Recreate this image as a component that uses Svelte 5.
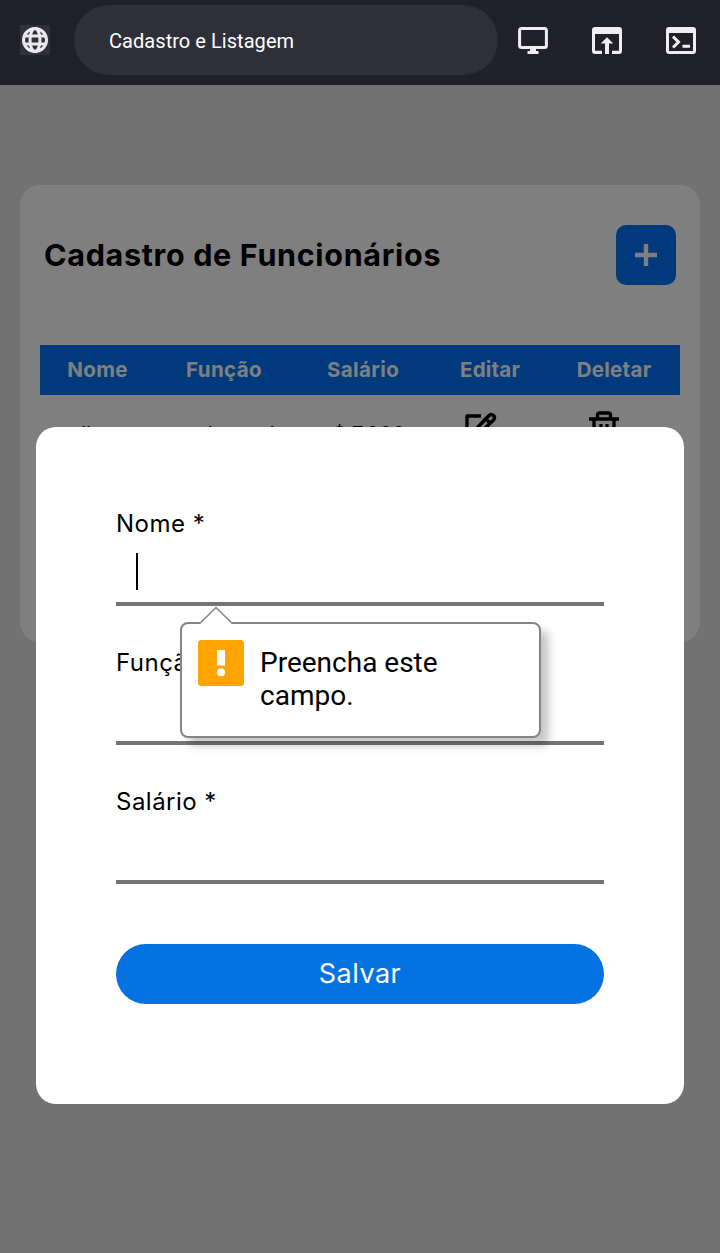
<script>
  const columns = [
    { label: 'Nome', width: 115, spacing: 0.35 },
    { label: 'Função', width: 138, spacing: 0.4 },
    { label: 'Salário', width: 140, spacing: 0.4 },
    { label: 'Editar', width: 114, spacing: 0.2 },
    { label: 'Deletar', width: 134, spacing: 0.3 }
  ];
  const fields = ['Nome', 'Função', 'Salário'];
</script>

<div class="screen">
  <header>
    <span class="globe">
      <svg width="30" height="30" viewBox="0 0 30 30" fill="none" stroke="#e9e9ef" stroke-width="3">
        <circle cx="15" cy="15" r="11.500" />
        <ellipse cx="15" cy="15" rx="5" ry="11.500" />
        <path d="M4 11h22M4 19h22" />
      </svg>
    </span>
    <div class="address">Cadastro e Listagem</div>
    <nav>
      <svg width="30" height="28" viewBox="0 0 30 28">
        <rect x="1.600" y="1.600" width="26.800" height="19" rx="2" fill="none" stroke="#ededf2" stroke-width="3" />
        <path d="M12 21h6v3h2.500v3h-11v-3H12z" fill="#ededf2" />
      </svg>
      <svg width="30" height="28" viewBox="0 0 30 28" fill="#ededf2">
        <path d="M3 0h24a3 3 0 0 1 3 3v21a3 3 0 0 1-3 3h-7v-3.300H27V7H3v16.700h7V27H3a3 3 0 0 1-3-3V3a3 3 0 0 1 3-3z" />
        <path d="M15 10.300l6.300 6.200h-4.300V27h-4V16.500H8.700z" />
      </svg>
      <svg width="30" height="28" viewBox="0 0 30 28">
        <path fill="#ededf2" fill-rule="evenodd" d="M3 0h24a3 3 0 0 1 3 3v21a3 3 0 0 1-3 3H3a3 3 0 0 1-3-3V3a3 3 0 0 1 3-3zM3 6v18h24V6z" />
        <path d="M7 9.500l5.500 5.500L7 20.500M16.500 19.300H24" fill="none" stroke="#ededf2" stroke-width="3" />
      </svg>
    </nav>
  </header>

  <main>
    <section class="card">
      <div class="title-row">
        <h1>Cadastro de Funcionários</h1>
        <button class="add" aria-label="Adicionar">
          <svg width="22" height="22" viewBox="0 0 22 22"><path d="M11 0v22M0 11h22" stroke="#fff" stroke-width="4.400" /></svg>
        </button>
      </div>
      <div class="table">
        <div class="row head">
          {#each columns as c}
            <span style="width:{c.width}px;letter-spacing:{c.spacing}px">{c.label}</span>
          {/each}
        </div>
        <div class="row body">
          <span class="name">all</span>
          <span class="role">coordenador</span>
          <span class="pay">$ 7.000</span>
          <span class="edit">
            <svg width="34" height="34" viewBox="0 0 34 34" fill="none" stroke="#000" stroke-width="3.400" stroke-linejoin="round">
              <path d="M17 5H3v26h26V17" />
              <path d="M11 24l2-7L25 4.500q2.500-2 4.500 0t0 4.500L17 21zM22 8l4 4" />
            </svg>
          </span>
          <span class="trash">
            <svg width="30" height="34" viewBox="0 0 30 34" fill="none" stroke="#000" stroke-width="3.300">
              <path d="M0 8h30M8.500 8V4q0-2 2-2h9q2 0 2 2v4M5 8v24h20V8M12 13v13M18 13v13" />
            </svg>
          </span>
        </div>
      </div>
    </section>

    <div class="overlay">
      <form class="modal" novalidate>
        {#each fields as name, i}
          <div class="field">
            <span class="label">{name} *</span>
            <div class="input">
              {#if i === 0}<i class="caret"></i>{/if}
            </div>
            {#if i === 0}
              <div class="tip">
                <svg class="arrow" width="36" height="19" viewBox="0 0 36 19">
                  <path d="M1.500 19v-2L18 1.500 34.500 17v2z" fill="#fff" />
                  <path d="M1 17.300h1L18 1.500l16 15.800h1" fill="none" stroke="#858585" stroke-width="1.500" />
                </svg>
                <svg class="warn" width="46" height="46" viewBox="0 0 46 46">
                  <rect width="46" height="46" rx="3.500" fill="#ffa400" />
                  <rect x="19" y="10" width="8" height="15.500" fill="#fff" />
                  <circle cx="23" cy="32.300" r="4" fill="#fff" />
                </svg>
                <p>Preencha este<br />campo.</p>
              </div>
            {/if}
          </div>
        {/each}
        <button type="button" class="save">Salvar</button>
      </form>
    </div>
  </main>
</div>

<style>
  :global(body) { margin: 0; background: #727272; }
  .screen { width: 720px; height: 1253px; overflow: hidden; display: flex; flex-direction: column; font-family: Inter, sans-serif; color: #000; }
  header { height: 85px; flex: none; box-sizing: border-box; background: #20202b; display: flex; align-items: center; padding: 0 24px 5px 20px; }
  .globe { width: 30px; height: 30px; background: #30303a; margin-right: 24px; }
  svg { display: block; }
  .address { width: 424px; height: 70px; border-radius: 35px; background: #2f2f39; color: #fff; font: 20px/73px Roboto, sans-serif; letter-spacing: 0.05px; padding-left: 35px; box-sizing: border-box; }
  nav { display: flex; gap: 44px; margin: 1px 0 0 20px; }
  main { position: relative; flex: 1; background: #e4e4e4; padding: 100px 20px 0; }
  .card { height: 457px; box-sizing: border-box; border-radius: 20px; background: #fff; padding: 40px 20px 0; }
  .title-row { height: 60px; display: flex; align-items: center; justify-content: space-between; padding: 0 4px; }
  h1 { margin: 0 0 2px; font-size: 30.500px; font-weight: 700; white-space: nowrap; letter-spacing: 0.680px; }
  button { border: 0; padding: 0; font-family: inherit; }
  .add { width: 60px; height: 60px; border-radius: 10px; background: #0074f8; display: grid; place-items: center; }
  .table { margin-top: 60px; }
  .row { display: flex; }
  .row span { flex: none; }
  .head { height: 50px; background: #0074f8; color: #fff; font-size: 20.500px; font-weight: 700; line-height: 50px; text-align: center; }
  .body { height: 80px; padding-top: 16px; box-sizing: border-box; font-size: 20px; line-height: 46px; white-space: nowrap; }
  .name { width: 117px; padding-left: 30px; box-sizing: border-box; }
  .role { width: 140px; letter-spacing: 3.700px; margin-left: -14px; }
  .pay { width: 89px; margin-left: 50px; font-size: 20.500px; }
  .edit { margin-left: 42px; }
  .trash { margin-left: 91px; }
  .overlay { position: absolute; inset: 0; background: rgba(0, 0, 0, 0.5); display: flex; justify-content: center; align-items: flex-start; padding-top: 342.400px; }
  .modal { width: 648px; height: 677px; box-sizing: border-box; border-radius: 20px; background: #fff; padding: 80px; }
  .field { position: relative; height: 139px; }
  .label { display: block; height: 33px; font-size: 24px; line-height: 33px; letter-spacing: 0.480px; }
  .input { height: 62px; border-bottom: 4px solid #757575; box-sizing: content-box; }
  .caret { display: block; width: 2px; height: 37px; background: #000; position: relative; left: 20px; top: 13px; }
  .tip { position: absolute; z-index: 2; left: 64px; top: 115px; width: 361px; height: 116px; box-sizing: border-box; border: 2px solid #858585; border-radius: 8px; background: #fff; box-shadow: 8px 8px 8px rgba(0, 0, 0, 0.22); display: flex; padding: 16px; gap: 16px; }
  .arrow { position: absolute; left: 16px; top: -18px; }
  .warn { flex: none; }
  p { margin: 6px 0 0; font: 28px/33px Roboto, sans-serif; white-space: nowrap; }
  .save { width: 488px; height: 60px; border-radius: 30px; background: #0572e1; color: #fff; font-size: 27px; letter-spacing: 0.500px; line-height: 58px; display: block; margin-top: 20px; }
</style>
